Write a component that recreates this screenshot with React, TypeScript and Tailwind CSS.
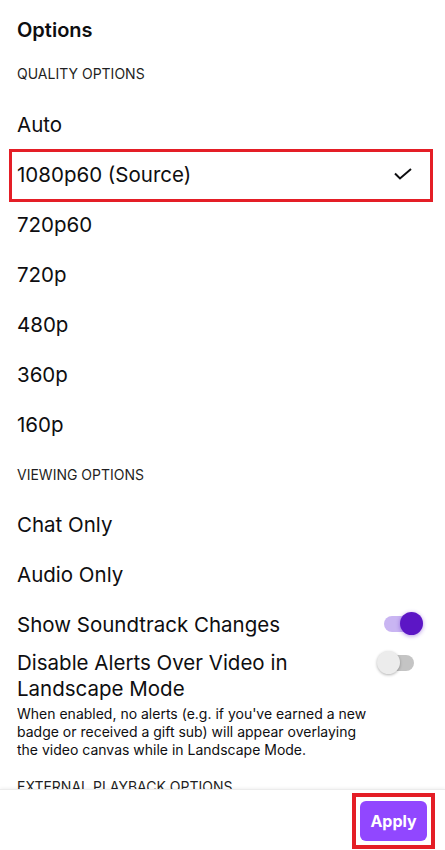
import React from "react";

const Row = ({ children, h = "h-[50px]" }: { children: React.ReactNode; h?: string }) => (
  <div className={`${h} flex items-center px-[17px] pt-[2px] text-[20.5px] text-[#0e0e10]`}>{children}</div>
);

export default function App() {
  const quality = ["Auto", "1080p60 (Source)", "720p60", "720p", "480p", "360p", "160p"];
  return (
    <div className="w-[445px] h-[850px] bg-white flex flex-col overflow-hidden" style={{ fontFamily: "Inter, 'Liberation Sans', sans-serif" }}>
      <div className="h-[789px] shrink-0 overflow-hidden">
        <div className="h-[58px] flex items-center px-[17px] pt-[1px] text-[20px] font-semibold text-[#0e0e10]">Options</div>
        <div className="h-[30px] flex items-center px-[17px] pt-[1px] text-[14px] text-[#1f1f23]">QUALITY OPTIONS</div>
        <div className="h-[11px]" />
        {quality.map((q) =>
          q === "1080p60 (Source)" ? (
            <div key={q} className="relative">
              <Row h="h-[50px]">
                <span className="flex-1">{q}</span>
                <svg width="20" height="14" viewBox="0 0 20 14" className="mr-[15px] mt-[-3px]">
                  <polyline points="2,6.5 7,11.5 18,2" fill="none" stroke="#0e0e10" strokeWidth="2" />
                </svg>
              </Row>
              <div className="absolute left-[9px] right-[12px] top-0 bottom-[-3px] border-[3.5px] border-[#e41e26] pointer-events-none" />
            </div>
          ) : (
            <Row key={q}>{q}</Row>
          )
        )}
        <div className="h-[50px] flex items-center px-[17px] pt-[1px] text-[14px] text-[#1f1f23]">VIEWING OPTIONS</div>
        <Row>Chat Only</Row>
        <Row>Audio Only</Row>
        <Row>
          <span className="flex-1">Show Soundtrack Changes</span>
          <div className="relative w-[30px] h-[16px] rounded-full bg-[#c9b5f2] mr-[14px] mt-[-3px]">
            <div className="absolute right-[-9px] top-[-4px] w-[23px] h-[23px] rounded-full bg-[#5c16c5] shadow-[0_1px_4px_rgba(92,22,197,0.45)]" />
          </div>
        </Row>
        <div className="flex px-[17px] pt-[1px]">
          <div className="flex-1">
            <div className="text-[20.5px] leading-[26px] text-[#0e0e10]">
              Disable Alerts Over Video in
              <br />
              Landscape Mode
            </div>
            <div className="mt-[3px] text-[14px] leading-[18px] text-[#0e0e10]">
              When enabled, no alerts (e.g. if you've earned a new
              <br />
              badge or received a gift sub) will appear overlaying
              <br />
              the video canvas while in Landscape Mode.
            </div>
          </div>
          <div className="relative w-[30px] h-[16px] rounded-full bg-[#c4c4c4] mt-[5px] mr-[14px]">
            <div className="absolute left-[-7px] top-[-4px] w-[23px] h-[23px] rounded-full bg-[#ececec] shadow-[0_1px_3px_rgba(0,0,0,0.3)]" />
          </div>
        </div>
        <div className="mt-[20px] px-[17px] text-[14px] text-[#1f1f23] leading-[16px]">EXTERNAL PLAYBACK OPTIONS</div>
      </div>
      <div className="flex-1 border-t border-[#ececec] shadow-[0_-1px_3px_rgba(0,0,0,0.06)] flex justify-end items-start pr-[10px] pt-[3px]">
        <div className="border-[4px] border-[#e41e26] p-[4px]">
          <div className="w-[67px] h-[40px] rounded-[6px] bg-[#9147ff] flex items-center justify-center text-white text-[16px] font-bold">Apply</div>
        </div>
      </div>
    </div>
  );
}
